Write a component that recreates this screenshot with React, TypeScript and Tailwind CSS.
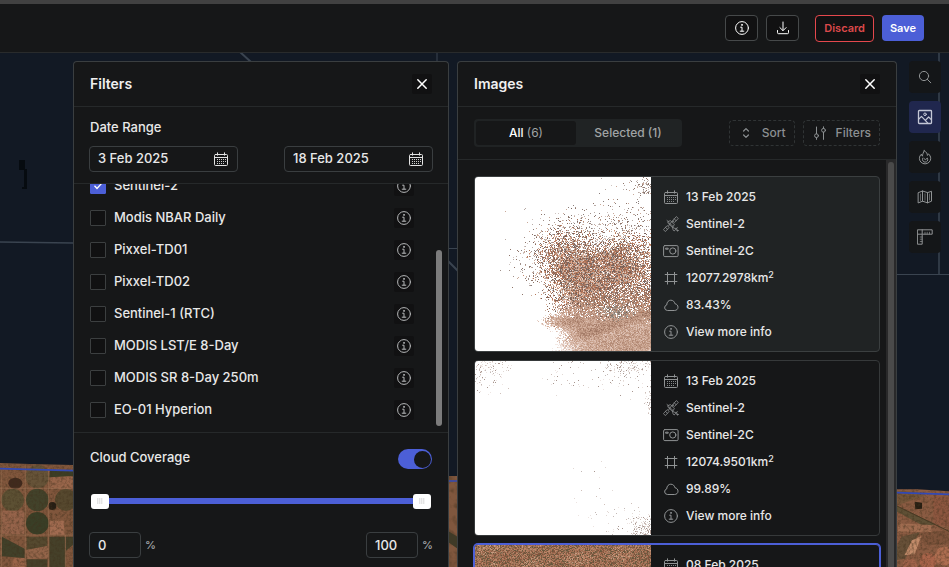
import { useState } from "react";
import type { ReactNode } from "react";

type IconProps = { className?: string };

const Icon = ({ className = "size-4", children }: IconProps & { children: ReactNode }) => (
  <svg
    className={className}
    viewBox="0 0 16 16"
    fill="none"
    stroke="currentColor"
    strokeWidth="1"
    strokeLinecap="round"
    strokeLinejoin="round"
    aria-hidden="true"
  >
    {children}
  </svg>
);

const InfoIcon = (props: IconProps) => (
  <Icon {...props}>
    <circle cx="8" cy="8" r="6.4" />
    <path d="M6.6 7.2H8v3.9M6.2 11.2h3.6" />
    <circle cx="7.9" cy="4.9" r=".45" fill="currentColor" />
  </Icon>
);

const DownloadIcon = (props: IconProps) => (
  <Icon {...props}>
    <path d="M8 2v8.4M4.9 7.6 8 10.7l3.1-3.1M2.5 10.5v2.2q0 1 1 1h9q1 0 1-1v-2.2" />
  </Icon>
);

const CloseIcon = (props: IconProps) => (
  <Icon {...props}>
    <path d="m3.8 3.8 8.4 8.4m0-8.4-8.4 8.4" strokeWidth="1.5" />
  </Icon>
);

const CalendarIcon = (props: IconProps) => (
  <Icon {...props}>
    <path d="M2.5 3.5h11a1 1 0 0 1 1 1v9a1 1 0 0 1-1 1h-11a1 1 0 0 1-1-1v-9a1 1 0 0 1 1-1ZM1.5 6.5h13M4.5 1.8v2.4M11.5 1.8v2.4" />
    <path d="M4 8.5h9M4 10.5h9M4 12.5h7" strokeDasharray="1 1" strokeLinecap="butt" strokeWidth=".9" />
  </Icon>
);

const SatelliteIcon = (props: IconProps) => (
  <Icon {...props}>
    <g strokeWidth=".8">
      <path d="m9.8 4.6 3.5-4 2 1.8-3.7 3.9ZM.7 13.3 4.2 9.6l2 1.8-3.6 3.9ZM11.3 2.9l1.9 1.9M2.5 11.4l1.9 1.8" />
      <path d="m5.2 5.5 2.3-.9 3.8 4-1.8 3-4.2-4.1ZM4 4.5l1.5 1.3M9 5.7l1.5-.8M5.6 9.9l1-1.2M6.1 6.9l3.6 3.3M8.5 5.8 6.7 8.2" />
      <path d="M9.8 11.2c1.4 1.6 3.2 1.7 4.7.5L11 15.1c-1.1-1-1.5-2.4-1.2-3.9ZM13 13.3l1.4 1.3" />
      <circle cx="14.5" cy="14.5" r=".6" />
    </g>
  </Icon>
);

const CameraIcon = (props: IconProps) => (
  <Icon {...props}>
    <rect x=".6" y="2.6" width="14.5" height="11" rx="1.2" />
    <circle cx="9.8" cy="8" r="3.1" />
    <path d="M3 5.2h2.2v1H3Z" />
  </Icon>
);

const AreaIcon = (props: IconProps) => (
  <Icon {...props}>
    <path d="M4.5 2v12.5M11.5 2v12.5M1.8 4.5h12.5M1.8 11.5h12.5" strokeLinecap="butt" />
  </Icon>
);

const CloudIcon = (props: IconProps) => (
  <Icon {...props}>
    <path d="M4.3 13.5a2.8 2.8 0 0 1-.6-5.5C3.8 4.9 5.7 3.2 7.8 3.2c2.2 0 3.6 1.3 4.1 3.5 2 .4 3.1 1.8 3.1 3.5 0 1.9-1.4 3.3-3.3 3.3Z" />
  </Icon>
);

const SortIcon = (props: IconProps) => (
  <Icon {...props}>
    <path d="M5.6 6 8 3.6 10.4 6M5.6 10 8 12.4l2.4-2.4" strokeWidth="1.2" />
  </Icon>
);

const SlidersIcon = (props: IconProps) => (
  <Icon {...props}>
    <path d="M4.5 2v6.8M4.5 12.6v1.8M11.5 1.8v1.6M11.5 7.2v7.2" />
    <circle cx="4.5" cy="10.7" r="1.9" />
    <circle cx="11.5" cy="5.3" r="1.9" />
  </Icon>
);

const SearchIcon = (props: IconProps) => (
  <Icon {...props}>
    <circle cx="7" cy="7" r="4.6" />
    <path d="m10.4 10.4 3.4 3.4" />
  </Icon>
);

const PictureIcon = (props: IconProps) => (
  <Icon {...props}>
    <rect x="1.5" y="1.5" width="13" height="13" rx=".8" strokeWidth="1.3" />
    <circle cx="8" cy="5.3" r="1.3" />
    <path d="m1.8 10 2.7-2.6 6.3 6.8M8.6 11.2l3-3.2 2.7 2.6" strokeWidth="1.2" />
  </Icon>
);

const FlameIcon = (props: IconProps) => (
  <Icon {...props}>
    <path d="M7.2 1.7c2.5 1.5 3.2 3 3.1 4.7.7-.3 1-.9 1.1-1.6 1.5 1.4 2.3 2.9 2.3 4.6a5.6 5.4 0 0 1-11.3 0c0-1.8.8-3.1 2-4.2.1 1 .5 1.6 1.1 2C5.4 5.3 6.5 3.6 7.2 1.7Z" />
    <path d="M5.7 9.2c-.8 2.5.6 3.9 2.4 3.9 2 0 3.3-1.7 2.3-4L8.3 10.7 7 9.5" />
  </Icon>
);

const MapIcon = (props: IconProps) => (
  <Icon {...props}>
    <path d="m1.5 3.6 4-1.6 5 1.6 4-1.3v9.9l-4 1.6-5-1.6-4 1.6ZM5.5 2v10.2M10.5 3.6v10.2" />
    <path d="M3.5 5v6.5M8 4.8v6.5M12.5 5v6" strokeWidth=".6" />
  </Icon>
);

const RulerIcon = (props: IconProps) => (
  <Icon {...props}>
    <path d="M.8.8h14.4v4.4h-10v10H.8ZM.8 5.2h4.4V.8" />
    <path d="M8 5V3.2M10.2 5V3.2M12.5 5V3.2M5 8H3.2M5 10.2H3.2M5 12.5H3.2" strokeWidth=".7" />
  </Icon>
);

// Small seeded generator so the thumbnails look the same on every render
const createRandom = (seed: number) => () => {
  seed = (seed * 1664525 + 1013904223) % 4294967296;
  return seed / 4294967296;
};

// Soft ellipse, 1 in the middle and falling to 0 past its radii
const blob = (x: number, y: number, cx: number, cy: number, rx: number, ry: number) =>
  Math.exp(-((((x - cx) / rx) ** 2 + ((y - cy) / ry) ** 2) ** 1.4));

type Layers = Record<string, string>;
type Shade = (x: number, y: number, random: () => number) => string | null;

const paint = (seed: number, height: number, shade: Shade): Layers => {
  const random = createRandom(seed);
  const layers: Layers = {};
  for (let y = 0; y < height; y++) {
    for (let x = 0; x < 176; x++) {
      const color = shade(x, y, random);
      if (color) layers[color] = (layers[color] || "") + `M${x} ${y}h1v1h-1z`;
    }
  }
  return layers;
};

const pick = (colors: string[], r: number) => colors[Math.max(0, Math.min(colors.length - 1, Math.floor(r * colors.length)))];

const SPECKS = ["#7b5f54", "#a87058", "#c68b6e", "#8d6857", "#c7a896", "#7a6863", "#dcae95", "#b3a49d", "#e3cdc2", "#b5785a"];
const DUST = ["#b9aca7", "#a08f89", "#cfc4c0", "#8d7469", "#c9a999", "#8a7e7b"];
const GROUND = ["#98725f", "#a67d69", "#b48b77", "#c09984", "#caa591", "#d4b2a1", "#dec2b5", "#e8d4cb", "#f4eae6"];
const FAINT = ["#e2d9d5", "#cfc0ba", "#c4bab7", "#ede4e1", "#a8968f"];
const SOIL = ["#80543d", "#8f6046", "#a06c50", "#ad795e", "#b98669", "#7a6045", "#96745a", "#68573d", "#a8745a", "#c49a80"];

const coastScene = paint(7, 174, (x, y, random) => {
  const edge = 77 + 3 * Math.sin(y / 6) - 13 * Math.exp(-(((y - 145) / 7) ** 2));
  const land = Math.min(1, (x - edge) / 30);
  const streak = Math.sin(x / 14 + y / 4.5) * 0.6 + Math.sin(y / 2.6 + x / 8) * 0.4 + Math.sin(x / 31 - y / 9) * 0.5;
  const shore = 108 + streak * 5;
  if (y > shore + random() * 34 && land + 0.05 > random() * 0.6) {
    if (blob(x, y, 140, 133, 15, 8) > random() * 1.3) return pick(["#938478", "#a1958a", "#aea49b", "#877a70"], random());
    const tone = 0.28 + streak * 0.1 + (1 - land) * 0.5 + (y - 125) / 170 + (random() - 0.5) * 0.45;
    return pick(GROUND, tone);
  }
  const core =
    blob(x, y, 90, 80, 25, 25) * 0.82 +
    blob(x, y, 150, 77, 31, 19) * 0.75 +
    blob(x, y, 128, 92, 30, 18) * 0.45 +
    blob(x, y, 101, 112, 25, 28) * 0.8 +
    blob(x, y, 155, 114, 45, 24) * 0.8;
  if (core * (0.9 + streak * 0.12) > random()) return pick(SPECKS, random());
  const halo =
    blob(x, y, 115, 78, 54, 32) * 0.16 +
    blob(x, y, 169, 9, 9, 8) * 0.35 +
    blob(x, y, 155, 25, 30, 26) * 0.04 +
    blob(x, y, 130, 50, 52, 20) * 0.09 +
    blob(x, y, 54, 88, 16, 20) * 0.1;
  return halo > random() ? pick(DUST, random()) : null;
});

const cloudScene = paint(21, 174, (x, y, random) => {
  const density =
    blob(x, y, 6, 4, 24, 22) * 0.2 +
    blob(x, y, 153, 2, 26, 10) * 0.25 +
    blob(x, y, 90, 8, 18, 18) * 0.06 +
    blob(x, y, 140, 20, 40, 14) * 0.03 +
    blob(x, y, 177, 40, 6, 14) * 0.4 +
    blob(x, y, 172, 168, 15, 14) * 0.45 +
    blob(x, y, 120, 128, 18, 26) * 0.015 +
    blob(x, y, 140, 160, 14, 20) * 0.03;
  return density > random() ? pick(FAINT, random()) : null;
});

const soilScene = paint(33, 48, (x, y, random) => {
  const patch = Math.sin(x / 11 + y / 8) * Math.cos(x / 19 - y / 6);
  return pick(SOIL, random() * 0.88 + (patch > 0.2 ? 0.12 : 0));
});

const Thumbnail = ({ layers, background, label }: { layers: Layers; background: string; label: string }) => (
  <svg
    className="w-44 shrink-0 self-stretch"
    viewBox="0 0 176 174"
    preserveAspectRatio="xMinYMin slice"
    shapeRendering="crispEdges"
    role="img"
    aria-label={label}
  >
    <rect width="176" height="174" fill={background} />
    {Object.entries(layers).map(([color, d]) => (
      <path key={color} d={d} fill={color} />
    ))}
  </svg>
);

const MapBackground = () => (
  <svg
    className="absolute inset-0 size-full"
    viewBox="0 0 949 514"
    preserveAspectRatio="xMinYMin slice"
    aria-hidden="true"
  >
    <defs>
      <filter id="grain" x="0" y="0" width="100%" height="100%" colorInterpolationFilters="sRGB">
        <feTurbulence type="fractalNoise" baseFrequency=".12" numOctaves="3" seed="4" />
        <feColorMatrix values="0 0 0 0 .25  0 0 0 0 .19  0 0 0 0 .11  1.2 0 0 0 -.5" />
        <feComposite in2="SourceGraphic" operator="in" result="noise" />
        <feMerge>
          <feMergeNode in="SourceGraphic" />
          <feMergeNode in="noise" />
        </feMerge>
      </filter>
    </defs>
    <rect width="949" height="514" fill="#121924" />
    <g stroke="#3a4450" fill="none">
      <path d="m0 189 73 1" strokeWidth="1.3" />
      <path d="m240-1 11 10M448 208l10 10" strokeWidth="2" />
      <path d="M437 0v9M448 195.5h10" />
      <path d="M939 0v221" strokeWidth="1.5" />
      <path d="M897 221.5h52" />
    </g>
    <path d="M19 107h6v10h-6ZM24 116h3v20h-5v-2h2Z" fill="#060b10" />

    <g transform="translate(0 327) scale(.3333)">
      <g filter="url(#grain)">
        <path d="m0 249 90 3 130 3v310H0Z" fill="#80563c" />
        <path d="M150 270h70v20l-30 8-42-6Z" fill="#3b3d25" />
        <path d="m152 292 66-4v38h-70Z" fill="#98654a" />
        <ellipse cx="46" cy="310" rx="21" ry="17" fill="#40291d" />
        <circle cx="38" cy="360" r="34" fill="#5c5033" />
        <circle cx="112" cy="290" r="35" fill="#665338" />
        <circle cx="112" cy="360" r="34" fill="#42422a" />
        <circle cx="112" cy="430" r="34" fill="#393e26" />
        <circle cx="198" cy="360" r="33" fill="#56482e" />
        <path d="M6 392h66v70H6Z" fill="#95634a" />
        <path d="M150 422h43v42h-43Z" fill="#a16b50" />
        <path d="m6 470 68 36v28l-68-5Z" fill="#414029" />
        <path d="M80 470h62v28l-62 12Z" fill="#55492f" />
        <path d="m78 510 66-12v36l-62 4Z" fill="#936449" />
        <path d="M148 470h48v91h-48ZM80 538h62v23H80ZM198 470h22v24l-22 18Z" fill="#454029" />
        <path d="M38 534h36v27H38Z" fill="#9a6448" />
        <circle cx="157" cy="378" r="12" fill="#261e14" />
      </g>
      <path d="M4 270v290M76 255v300M146 265v300M196 465v96M0 325h215M0 465h220" stroke="#a1795a" strokeWidth="2" fill="none" opacity=".7" />
      <path d="m0 266 220 6" stroke="#3249b6" strokeWidth="5" />
    </g>

    <g transform="translate(448 423)">
      <path d="M0 0h10v91H0Z" fill="#80573e" filter="url(#grain)" />
      <path d="m0 55 10 6v12L0 66Z" fill="#3f3a27" />
      <path d="M0 5h10" stroke="#3249b6" strokeWidth="1.5" />
    </g>

    <g transform="translate(870 367) scale(.3333)">
      <g filter="url(#grain)">
        <path d="M81 208h62l94 6v227H81Z" fill="#8a5b42" />
        <path d="m82 212 60 4 22 12-82 28Z" fill="#75563a" />
        <path d="m190 226 47 4v88l-47-2Z" fill="#8c563f" />
        <path d="m81 258 115 55-30 8-85-46Z" fill="#5f5035" />
        <path d="m84 310 100 5v22l-100-2Z" fill="#a06c50" />
        <path d="m94 350 56-14-45 80-24 4v-40Z" fill="#675038" />
        <path d="m150 338 87-6v40l-75 4Z" fill="#7d533b" />
        <path d="m104 405 22-44 28-12-20 54Z" fill="#c28b6a" />
        <circle cx="174" cy="424" r="25" fill="#a9644a" />
        <circle cx="222" cy="408" r="28" fill="#ad6d50" />
        <circle cx="120" cy="438" r="22" fill="#a0634a" />
        <path d="m134 245 22 3v18l-20 2Z" fill="#271e12" />
      </g>
      <path d="m81 258 90 44 66 32" stroke="#473923" strokeWidth="3" fill="none" />
      <path d="m81 218 156 5" stroke="#3249b6" strokeWidth="5" />
    </g>
  </svg>
);

const tools = [
  { label: "Search", icon: SearchIcon },
  { label: "Images", icon: PictureIcon },
  { label: "Hotspots", icon: FlameIcon },
  { label: "Basemap", icon: MapIcon },
  { label: "Measure", icon: RulerIcon },
];

const sources = [
  "Sentinel-2",
  "Modis NBAR Daily",
  "Pixxel-TD01",
  "Pixxel-TD02",
  "Sentinel-1 (RTC)",
  "MODIS LST/E 8-Day",
  "MODIS SR 8-Day 250m",
  "EO-01 Hyperion",
];

const images = [
  { date: "13 Feb 2025", area: "12077.2978", cloud: "83.43%", layers: coastScene, background: "#ffffff", card: "border-[#3b3f40] bg-[#202324]" },
  { date: "13 Feb 2025", area: "12074.9501", cloud: "99.89%", layers: cloudScene, background: "#ffffff", card: "border-[#36393a] bg-[#161718]" },
  { date: "08 Feb 2025", area: "12056.4102", cloud: "0.02%", layers: soilScene, background: "#94684e", card: "border-[#4c5fd7] bg-[#161718] ring-1 ring-[#4c5fd7]" },
];

const PanelHeader = ({ title }: { title: string }) => (
  <div className="flex h-[45px] shrink-0 items-center justify-between border-b border-[#26292a] px-4">
    <h2 className="text-sm font-semibold text-[#f0f0f0]">{title}</h2>
    <button aria-label={`Close ${title}`} className="flex size-5 items-center justify-center rounded-xs bg-[#111112] text-white">
      <CloseIcon className="size-4" />
    </button>
  </div>
);

const DateField = ({ label, initial }: { label: string; initial: string }) => {
  const [value, setValue] = useState(initial);
  return (
    <label className="flex h-[26px] w-[149px] items-center rounded border border-[#3a3e40] px-2">
      <input
        aria-label={label}
        className="w-full min-w-0 flex-1 bg-transparent outline-none"
        value={value}
        onChange={(e) => setValue(e.target.value)}
      />
      <CalendarIcon className="size-4 shrink-0 text-[#e4e4e4]" />
    </label>
  );
};

const PercentField = ({ label, value, onChange }: { label: string; value: number; onChange: (value: number) => void }) => (
  <label className="flex items-center gap-1 text-[#a5a8aa]">
    <input
      aria-label={label}
      className="h-[26px] w-[52px] rounded border border-[#3a3e40] bg-transparent px-2 text-[#e8e8e8] outline-none"
      value={value}
      onChange={(e) => onChange(Number(e.target.value) || 0)}
    />
    <span className="text-[11px]">%</span>
  </label>
);

const rangeClass =
  "pointer-events-none absolute inset-0 h-4 w-full appearance-none bg-transparent [&::-webkit-slider-thumb]:pointer-events-auto [&::-webkit-slider-thumb]:h-[15px] [&::-webkit-slider-thumb]:w-[18px] [&::-webkit-slider-thumb]:appearance-none [&::-webkit-slider-thumb]:rounded-[3px] [&::-webkit-slider-thumb]:bg-white [&::-webkit-slider-thumb]:bg-[repeating-linear-gradient(90deg,#e4e4e4_0_1px,#f4f4f4_1px_2px)] [&::-webkit-slider-thumb]:bg-[length:6px_6px] [&::-webkit-slider-thumb]:bg-center [&::-webkit-slider-thumb]:bg-no-repeat";

const FiltersPanel = () => {
  const [checked, setChecked] = useState<string[]>(["Sentinel-2"]);
  const [cloudEnabled, setCloudEnabled] = useState(true);
  const [min, setMin] = useState(0);
  const [max, setMax] = useState(100);

  const toggle = (source: string) => {
    setChecked(checked.includes(source) ? checked.filter((s) => s !== source) : [...checked, source]);
  };

  return (
    <section className="flex w-[376px] flex-col rounded-t border border-b-0 border-[#3a3e40] bg-[#161718] text-[13px] font-medium text-[#e8e8e8]">
      <PanelHeader title="Filters" />

      <div className="flex h-[77px] shrink-0 flex-col gap-[9px] border-b border-[#26292a] px-[15px] pt-2.5">
        <h3 className="pl-px leading-5">Date Range</h3>
        <div className="flex justify-between">
          <DateField label="Start date" initial="3 Feb 2025" />
          <DateField label="End date" initial="18 Feb 2025" />
        </div>
      </div>

      <div className="relative flex h-[249px] shrink-0 flex-col justify-end overflow-hidden border-b border-[#26292a] pr-[34px] pb-1.5 pl-4">
        {sources.map((source) => (
          <div key={source} className="flex h-8 shrink-0 items-center justify-between">
            <label className="flex items-center gap-2">
              <span className="grid">
                <input
                  type="checkbox"
                  className="peer col-start-1 row-start-1 size-4 appearance-none rounded-[1px] border border-[#3c3f40] bg-[#111112] checked:border-[#4c5fd7] checked:bg-[#4c5fd7]"
                  checked={checked.includes(source)}
                  onChange={() => toggle(source)}
                />
                <svg
                  className="pointer-events-none invisible col-start-1 row-start-1 size-4 peer-checked:visible"
                  viewBox="0 0 16 16"
                  fill="none"
                  stroke="#ffffff"
                  strokeWidth="1.3"
                  aria-hidden="true"
                >
                  <path d="m4.5 7.8 2.5 2.7 4.5-5" />
                </svg>
              </span>
              {source}
            </label>
            <button aria-label={`About ${source}`} className="flex size-5 items-center justify-center rounded-xs bg-[#111112] text-[#b5b7b8]">
              <InfoIcon />
            </button>
          </div>
        ))}
        <div className="absolute right-1.5 bottom-1.5 h-44 w-1.5 rounded-full bg-[#7c7c7c]" />
      </div>

      <div className="flex shrink-0 flex-col px-[15px] pt-3.5 pb-6">
        <div className="flex items-start justify-between px-px">
          <label htmlFor="cloud-toggle" className="leading-5">Cloud Coverage</label>
          <input
            id="cloud-toggle"
            type="checkbox"
            role="switch"
            checked={cloudEnabled}
            onChange={() => setCloudEnabled(!cloudEnabled)}
            className="mt-0.5 flex h-5 w-[34px] appearance-none items-center rounded-full bg-[#3a3e40] px-px before:size-[17px] before:rounded-full before:bg-[#161718] checked:justify-end checked:bg-[#4c5fd7]"
          />
        </div>
        <div className="relative mx-0.5 mt-6 flex h-4 items-center">
          <div className="mx-2.5 h-1.5 flex-1 bg-[#4c5fd7]" />
          <input aria-label="Minimum cloud coverage" type="range" className={rangeClass} value={min} onChange={(e) => setMin(Math.min(Number(e.target.value), max))} />
          <input aria-label="Maximum cloud coverage" type="range" className={rangeClass} value={max} onChange={(e) => setMax(Math.max(Number(e.target.value), min))} />
        </div>
        <div className="mt-[23px] flex justify-between">
          <PercentField label="Minimum cloud coverage percent" value={min} onChange={setMin} />
          <PercentField label="Maximum cloud coverage percent" value={max} onChange={setMax} />
        </div>
      </div>
    </section>
  );
};

const ImageCard = ({ image }: { image: (typeof images)[number] }) => {
  const rows = [
    { icon: CalendarIcon, text: image.date },
    { icon: SatelliteIcon, text: "Sentinel-2" },
    { icon: CameraIcon, text: "Sentinel-2C" },
    { icon: AreaIcon, text: <>{image.area}km<sup className="text-[9px]">2</sup></> },
    { icon: CloudIcon, text: image.cloud },
  ];

  return (
    <article className={`flex shrink-0 overflow-hidden rounded border ${image.card}`}>
      <Thumbnail layers={image.layers} background={image.background} label={`Preview ${image.date}`} />
      <div className="flex flex-1 flex-col gap-[7px] px-3 pt-2.5 pb-[9px]">
        {rows.map(({ icon: RowIcon, text }, index) => (
          <div key={index} className="flex h-5 items-center gap-[7px]">
            <RowIcon className="size-4 text-[#909394]" />
            <span>{text}</span>
          </div>
        ))}
        <button className="flex h-5 items-center gap-[7px]">
          <InfoIcon className="size-4 text-[#909394]" />
          View more info
        </button>
      </div>
    </article>
  );
};

const ImagesPanel = () => {
  const [tab, setTab] = useState("all");
  const tabClass = (name: string) =>
    `rounded-[3px] ${tab === name ? "bg-[#161718] text-white" : "text-[#a0a3a4]"}`;

  return (
    <section className="flex min-w-0 flex-1 flex-col overflow-hidden rounded-t border border-b-0 border-[#3a3e40] bg-[#161718] text-xs font-medium text-[#e8e8e8]">
      <PanelHeader title="Images" />

      <div className="flex h-[53px] shrink-0 items-center justify-between border-b border-[#26292a] px-4">
        <div className="grid h-7 w-52 grid-cols-[100px_1fr] rounded bg-[#202324] p-0.5">
          <button className={tabClass("all")} onClick={() => setTab("all")}>
            All <span className="font-normal text-[#a0a3a4]">(6)</span>
          </button>
          <button className={tabClass("selected")} onClick={() => setTab("selected")}>
            Selected (1)
          </button>
        </div>
        <div className="flex gap-2 text-[#8c9092]">
          <button className="flex h-[26px] items-center gap-2 rounded border border-dashed border-[#303435] px-2">
            <SortIcon />
            Sort
          </button>
          <button className="flex h-[26px] items-center gap-2 rounded border border-dashed border-[#303435] px-2">
            <SlidersIcon />
            Filters
          </button>
        </div>
      </div>

      <div className="flex min-h-0 flex-1">
        <div className="flex min-w-0 flex-1 flex-col gap-2 overflow-hidden py-4 pr-1.5 pl-4">
          {images.map((image, index) => (
            <ImageCard key={index} image={image} />
          ))}
        </div>
        <div className="w-2.5 bg-[#29292a] px-0.5 pt-0.5">
          <div className="h-full rounded-t-full bg-[#4a4a4a]" />
        </div>
      </div>
    </section>
  );
};

const App = () => {
  const [activeTool, setActiveTool] = useState("Images");

  return (
    <div className="flex h-screen flex-col overflow-hidden bg-[#121924] font-['Inter',sans-serif]">
      <header className="flex h-[53px] shrink-0 items-center justify-end border-t-4 border-b border-t-[#414141] border-b-[#292b2c] bg-[#161718] pr-[25px] text-[11px] font-semibold">
        <div className="flex items-center gap-2">
          <button aria-label="Info" className="flex h-[26px] w-[33px] items-center justify-center rounded border border-[#46494a] bg-[#111112] text-white">
            <InfoIcon />
          </button>
          <button aria-label="Download" className="flex h-[26px] w-[33px] items-center justify-center rounded border border-[#46494a] bg-[#111112] text-white">
            <DownloadIcon />
          </button>
          <button className="ml-2 h-[27px] rounded border border-[#e5484d] bg-[#111112] px-2 text-[#dc494b]">Discard</button>
          <button className="h-[26px] rounded bg-[#4c5fd7] px-2 text-white">Save</button>
        </div>
      </header>

      <main className="relative flex min-h-0 flex-1">
        <MapBackground />
        <div className="relative flex min-w-0 flex-1 gap-2 overflow-hidden pt-2 pr-2 pl-[73px]">
          <FiltersPanel />
          <ImagesPanel />
          <nav className="ml-1 flex shrink-0 flex-col gap-2">
            {tools.map(({ label, icon: ToolIcon }) => (
              <button
                key={label}
                aria-label={label}
                onClick={() => setActiveTool(label)}
                className={`flex size-8 items-center justify-center rounded ${activeTool === label ? "bg-[#20274e] text-[#c4c7d6]" : "bg-[#141618] text-[#909394]"}`}
              >
                <ToolIcon className="size-4" />
              </button>
            ))}
          </nav>
        </div>
      </main>
    </div>
  );
};

export default App;
